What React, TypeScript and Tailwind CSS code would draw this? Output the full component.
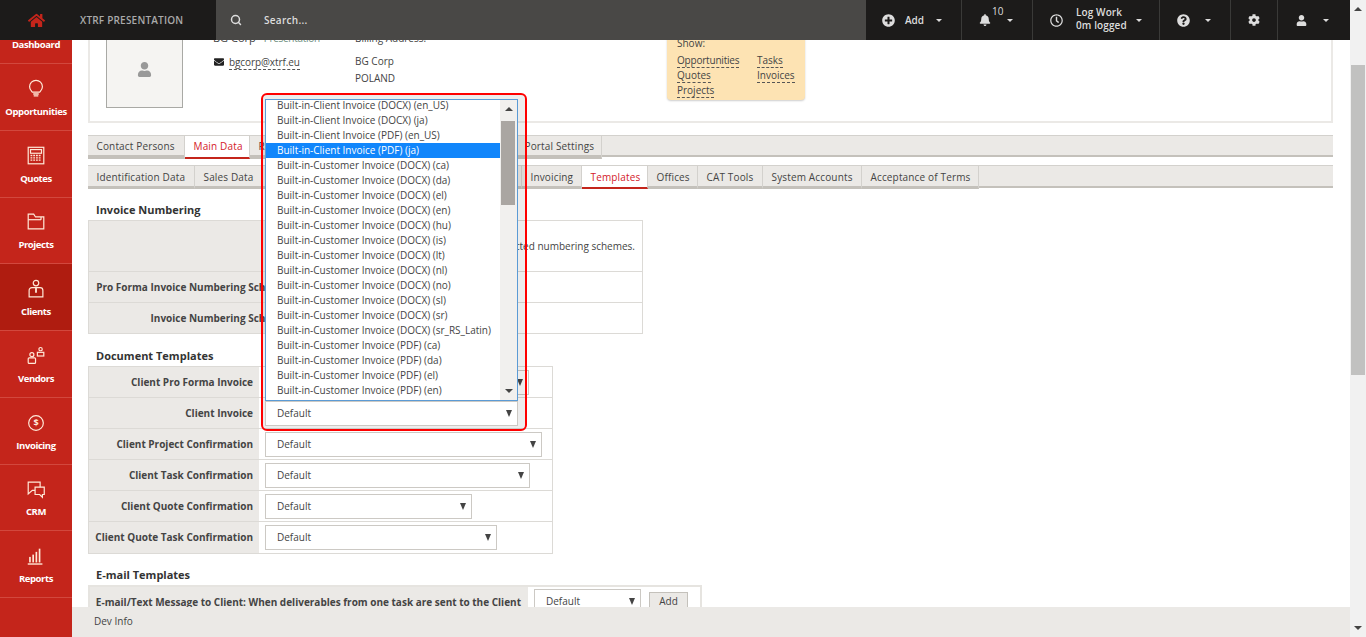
import { Search } from "lucide-react";
import { FaBell, FaCog, FaEnvelope, FaHome, FaPlusCircle, FaQuestionCircle, FaRegClock, FaUser } from "react-icons/fa";
import type { ReactNode } from "react";

const stroke = { fill: "none", stroke: "currentColor", strokeWidth: 1.3 };

const navItems: { label: string; icon: ReactNode; active?: boolean }[] = [
  { label: "Dashboard", icon: null },
  {
    label: "Opportunities",
    icon: (
      <g {...stroke}>
        <path d="M8 15.5c-1-1.4-3-3-3-6a7 7 0 0 1 14 0c0 3-2 4.6-3 6z" />
        <path d="M9 17.5h6M9.5 19.5h5" strokeWidth={1.6} />
      </g>
    ),
  },
  {
    label: "Quotes",
    icon: (
      <g {...stroke}>
        <rect x="3.5" y="2.5" width="17" height="18" />
        <rect x="6" y="5" width="12" height="4" />
        <path d="M6 11.5h12M6 14h12M6 16.5h12" strokeWidth={1.5} strokeDasharray="2 1" />
      </g>
    ),
  },
  {
    label: "Projects",
    icon: (
      <g {...stroke}>
        <path d="M3.5 19.5V3.5h6l2 3h9v13z" />
        <path d="M3.5 9.5h14" />
        <path d="M17.5 6.5v3" />
      </g>
    ),
  },
  {
    label: "Clients",
    active: true,
    icon: (
      <g {...stroke}>
        <circle cx="12" cy="5.5" r="3" />
        <path d="M4.5 20.5v-7a3 3 0 0 1 3-3h9a3 3 0 0 1 3 3v7z" />
        <path d="M12 11v5" strokeWidth={2} />
      </g>
    ),
  },
  {
    label: "Vendors",
    icon: (
      <g {...stroke}>
        <circle cx="7.5" cy="10.5" r="2.2" />
        <rect x="3.5" y="14" width="8" height="6" rx="1" />
        <circle cx="17" cy="4.5" r="1.8" />
        <rect x="13.5" y="8" width="7" height="4" />
      </g>
    ),
  },
  {
    label: "Invoicing",
    icon: (
      <g {...stroke}>
        <circle cx="12" cy="12" r="8" />
        <text x="12" y="15.5" textAnchor="middle" fontSize="10" fontWeight="700" fill="currentColor" stroke="none">$</text>
      </g>
    ),
  },
  {
    label: "CRM",
    icon: (
      <g {...stroke}>
        <path d="M3.5 4.5h13v9H8l-4.5 4z" />
        <path d="M11 10h10v8h-2v3l-3-3h-5z" fill="#c4251b" />
      </g>
    ),
  },
  {
    label: "Reports",
    icon: (
      <g fill="currentColor">
        <rect x="4.5" y="13" width="1.8" height="6" />
        <rect x="8" y="10.5" width="1.8" height="8.5" />
        <rect x="11.5" y="7.5" width="1.8" height="11.5" />
        <rect x="15" y="4" width="1.8" height="15" />
        <rect x="3" y="20" width="16" height="1.5" />
      </g>
    ),
  },
];

const selectOptions = [
  "Built-in-Client Invoice (DOCX) (en_US)",
  "Built-in-Client Invoice (DOCX) (ja)",
  "Built-in-Client Invoice (PDF) (en_US)",
  "Built-in-Client Invoice (PDF) (ja)",
  "Built-in-Customer Invoice (DOCX) (ca)",
  "Built-in-Customer Invoice (DOCX) (da)",
  "Built-in-Customer Invoice (DOCX) (el)",
  "Built-in-Customer Invoice (DOCX) (en)",
  "Built-in-Customer Invoice (DOCX) (hu)",
  "Built-in-Customer Invoice (DOCX) (is)",
  "Built-in-Customer Invoice (DOCX) (lt)",
  "Built-in-Customer Invoice (DOCX) (nl)",
  "Built-in-Customer Invoice (DOCX) (no)",
  "Built-in-Customer Invoice (DOCX) (sl)",
  "Built-in-Customer Invoice (DOCX) (sr)",
  "Built-in-Customer Invoice (DOCX) (sr_RS_Latin)",
  "Built-in-Customer Invoice (PDF) (ca)",
  "Built-in-Customer Invoice (PDF) (da)",
  "Built-in-Customer Invoice (PDF) (el)",
  "Built-in-Customer Invoice (PDF) (en)",
];

const docTemplates = [
  { label: "Client Pro Forma Invoice", width: "w-[264px]" },
  { label: "Client Invoice", width: "w-[252px]" },
  { label: "Client Project Confirmation", width: "w-[277px]" },
  { label: "Client Task Confirmation", width: "w-[265px]" },
  { label: "Client Quote Confirmation", width: "w-[207px]" },
  { label: "Client Quote Task Confirmation", width: "w-[232px]" },
];

const mainTabs = [
  { label: "Contact Persons", width: "w-[97px]" },
  { label: "Main Data", width: "w-[65px]", active: true },
  { label: "Rates", width: "w-[266px]" },
  { label: "Portal Settings", width: "w-[86px]" },
];

const subTabs = [
  { label: "Identification Data", width: "w-[107px]" },
  { label: "Sales Data", width: "w-[327px]" },
  { label: "Invoicing", width: "w-[60px]" },
  { label: "Templates", width: "w-[66px]", active: true },
  { label: "Offices", width: "w-[50px]" },
  { label: "CAT Tools", width: "w-[65px]" },
  { label: "System Accounts", width: "w-[99px]" },
  { label: "Acceptance of Terms", width: "w-[117px]" },
];

function Caret() {
  return <span className="block h-0 w-0 border-x-[3px] border-t-[3px] border-x-transparent border-t-[#ddd]" />;
}

function SelectArrow() {
  return <span className="block h-0 w-0 border-x-[3.5px] border-t-[7px] border-x-transparent border-t-[#444]" />;
}

function Select({ width }: { width: string }) {
  return (
    <div className={`flex h-[25px] items-center justify-between border border-[#ccc9c4] bg-white pl-[11px] pr-[5px] ${width}`}>
      <span>Default</span>
      <SelectArrow />
    </div>
  );
}

function TabBar({ tabs, className }: { tabs: { label: string; width: string; active?: boolean }[]; className: string }) {
  return (
    <div className={`flex border-t border-[#d3d1cd] bg-[#ebe9e6] tracking-[0.15px] ${className}`}>
      {tabs.map((tab) => (
        <div
          key={tab.label}
          className={`-mb-[2px] h-[23px] border-r border-[#d3d1cd] pl-[8.5px] ${tab.width} ${
            tab.active ? "border-b-2 border-b-[#c4251b] bg-white text-[#d4202a]" : "border-b-2 border-b-[#c4c1bb]"
          }`}
        >
          {tab.label}
        </div>
      ))}
    </div>
  );
}

function DashedLink({ children }: { children: ReactNode }) {
  return <span className="border-b border-dashed border-[#555] leading-[14px]">{children}</span>;
}

export default function App() {
  return (
    <div className="relative flex h-[637px] w-[1366px] overflow-hidden bg-white font-['Open_Sans',sans-serif] text-[10px] text-[#444]">
      <div className="flex min-w-0 flex-1 flex-col">
        <header className="z-10 flex h-10 shrink-0 text-[#ddd]">
          <div className="flex w-[216px] items-center bg-[#1c1b1a]">
            <FaHome className="ml-[28px] h-[17px] w-[17px] text-[#c4251b]" />
            <span className="ml-[35px] font-semibold tracking-[0.2px] text-[#aaa]">XTRF PRESENTATION</span>
          </div>
          <div className="flex w-[650px] items-center bg-[#494846]">
            <Search className="ml-[14px] h-3 w-3" strokeWidth={3} />
            <span className="ml-[22px] font-semibold tracking-[0.3px]">Search...</span>
          </div>
          <div className="flex flex-1 items-center bg-[#1c1b1a] font-semibold">
            <div className="flex h-full w-[96px] items-center border-r border-[#3a3a38] pl-[16px]">
              <FaPlusCircle className="h-[13px] w-[13px]" />
              <span className="ml-[10px] mr-[12px]">Add</span>
              <Caret />
            </div>
            <div className="flex h-full w-[71px] items-center border-r border-[#3a3a38] pl-[17px]">
              <FaBell className="h-3 w-3" />
              <span className="mb-[18px] ml-[1px] font-normal">10</span>
              <span className="ml-[4px]"><Caret /></span>
            </div>
            <div className="flex h-full w-[127px] items-center border-r border-[#3a3a38] pl-[17px]">
              <FaRegClock className="h-[13px] w-[13px]" />
              <div className="mb-[2px] ml-[13px] leading-[13px] tracking-[0.1px]">
                <div>Log Work</div>
                <div>0m logged</div>
              </div>
              <span className="ml-[9px]"><Caret /></span>
            </div>
            <div className="flex h-full w-[71px] items-center border-r border-[#3a3a38] pl-[17px]">
              <FaQuestionCircle className="h-[13px] w-[13px]" />
              <span className="ml-[15px]"><Caret /></span>
            </div>
            <div className="flex h-full w-[47px] items-center border-r border-[#3a3a38] pl-[17px]">
              <FaCog className="h-3 w-3" />
            </div>
            <div className="flex h-full flex-1 items-center pl-[18px]">
              <FaUser className="h-[11px] w-[11px]" />
              <span className="ml-[16px]"><Caret /></span>
            </div>
          </div>
        </header>

        <div className="flex min-h-0 flex-1">
          <nav className="w-[72px] shrink-0 overflow-hidden bg-[#c4251b] text-white">
            <div className="-mt-[42.75px]">
              {navItems.map((item) => (
                <div
                  key={item.label}
                  className={`flex h-[66.75px] flex-col items-center justify-end border-b border-[#d2483e] pb-[11px] ${
                    item.active ? "bg-[#af1c10]" : ""
                  }`}
                >
                  <svg viewBox="0 0 24 24" className="mb-[5px] h-[22px] w-[22px] text-[#ffe9d8]">
                    {item.icon}
                  </svg>
                  <span className="text-[9.5px] font-bold leading-[14px] tracking-[-0.4px]">{item.label}</span>
                </div>
              ))}
            </div>
          </nav>

          <div className="flex min-w-0 flex-1 flex-col">
            <main className="min-h-0 flex-1 overflow-hidden pl-4 pr-[17px]">
              <div className="-mt-[30px]">
                <section className="flex h-[113px] border-2 border-[#ebe9e6] pl-4 pt-[18px]">
                  <div className="flex h-[78px] w-[77px] shrink-0 items-center justify-center border border-[#a9a9a5] bg-[#f5f4f2]">
                    <FaUser className="h-[15px] w-[15px] text-[#999]" />
                  </div>
                  <div className="ml-[30px] w-[142px] shrink-0">
                    <div className="leading-[16px]">
                      <span className="text-[11px]">BG Corp</span>
                      <span className="ml-[8px] tracking-[-0.3px] text-[#6f8f7f]">Presentation</span>
                    </div>
                    <div className="mt-[9px] flex items-center leading-[14px]">
                      <FaEnvelope className="ml-px mr-[5px] h-[10px] w-[10px] text-[#222]" />
                      <span className="tracking-[-0.1px]"><DashedLink>bgcorp@xtrf.eu</DashedLink></span>
                    </div>
                  </div>
                  <div className="w-[312px] shrink-0">
                    <div className="leading-[16px]">Billing Address:</div>
                    <div className="mt-[7px] leading-[17px]">BG Corp</div>
                    <div className="leading-[17px]">POLAND</div>
                  </div>
                  <div className="h-[70px] w-[138px] shrink-0 rounded-b-[4px] bg-[#fde3b3] pl-[10px] pt-[6px] shadow-[0_1px_2px_rgba(0,0,0,0.2)]">
                    <div className="leading-[14px]">Show:</div>
                    <div className="mt-[3px] grid grid-cols-[80px_1fr] justify-items-start leading-[14px]">
                      <span className="tracking-[-0.2px]"><DashedLink>Opportunities</DashedLink></span>
                      <DashedLink>Tasks</DashedLink>
                      <DashedLink>Quotes</DashedLink>
                      <DashedLink>Invoices</DashedLink>
                      <DashedLink>Projects</DashedLink>
                    </div>
                  </div>
                </section>

                <TabBar tabs={mainTabs} className="mt-3 h-[22px] border-b-2 border-b-[#c4c1bb] leading-[20px]" />
                <TabBar tabs={subTabs} className="mt-2 h-[23px] border-b-2 border-b-[#c4c1bb] leading-[22px]" />

                <h2 className="ml-2 mt-[14px] text-[11px] font-bold leading-[16px] text-[#333]">Invoice Numbering</h2>
                <div className="mt-[2px] w-[555px] border border-[#dcdad6]">
                  <div className="flex h-[51px] border-b border-[#dcdad6]">
                    <div className="w-[198px] shrink-0 bg-[#ebe9e6]" />
                    <div className="flex flex-1 items-center justify-end whitespace-nowrap pr-[7px]">
                      Invoices will be numbered according to the selected numbering schemes.
                    </div>
                  </div>
                  <div className="flex h-[31px] border-b border-[#dcdad6]">
                    <div className="flex w-[198px] items-center justify-end bg-[#ebe9e6] font-bold">Pro Forma Invoice Numbering Scheme</div>
                  </div>
                  <div className="flex h-[30px]">
                    <div className="flex w-[198px] items-center justify-end bg-[#ebe9e6] font-bold">Invoice Numbering Scheme</div>
                  </div>
                </div>

                <h2 className="ml-2 mt-[14px] text-[11px] font-bold leading-[16px] text-[#333]">Document Templates</h2>
                <div className="mt-[2px] w-[465px] border border-[#dcdad6]">
                  {docTemplates.map((row, i) => (
                    <div key={row.label} className={`flex h-[31px] ${i < docTemplates.length - 1 ? "border-b border-[#dcdad6]" : ""}`}>
                      <div className="flex w-[170px] shrink-0 items-center justify-end bg-[#ebe9e6] pr-[6px] font-bold">{row.label}</div>
                      <div className="flex items-center pl-[6px]">
                        <Select width={row.width} />
                      </div>
                    </div>
                  ))}
                </div>

                <h2 className="ml-2 mt-[13px] text-[11px] font-bold leading-[16px] text-[#333]">E-mail Templates</h2>
                <div className="mt-[2px] flex h-[40px] w-[614px] border-2 border-[#e6e4e0]">
                  <div className="flex w-[438px] shrink-0 items-start justify-end bg-[#ebe9e6] pr-[7px] pt-[8px] font-bold leading-[14px]">
                    E-mail/Text Message to Client: When deliverables from one task are sent to the Client
                  </div>
                  <div className="flex items-start pl-[6px] pt-[2px]">
                    <Select width="w-[107px]" />
                    <div className="ml-[8px] mt-[3px] flex h-[18px] w-[39px] items-center justify-center border border-[#c4c1bb] bg-[#ebe9e6]">Add</div>
                  </div>
                </div>
              </div>
            </main>
            <footer className="z-10 flex h-[30px] shrink-0 items-center bg-[#ebe9e6] pb-px pl-[22px]">Dev Info</footer>
          </div>
        </div>
      </div>

      <div className="flex w-4 shrink-0 flex-col items-center justify-between bg-[#f1f1f1] py-[7px]">
        <span className="h-0 w-0 border-x-[4px] border-b-[4px] border-x-transparent border-b-[#444]" />
        <span className="h-0 w-0 border-x-[4px] border-t-[4px] border-x-transparent border-t-[#444]" />
        <div className="absolute right-[1px] top-[65px] h-[310px] w-[14px] bg-[#c1c1c0]" />
      </div>

      {/* open select of the Client Invoice row */}
      <div className="absolute left-[261px] top-[93px] z-20 h-[338px] w-[266px] rounded-[6px] border-2 border-[#ff0000] bg-black/[0.07] pl-[2px] pt-[4px]">
        <div className="flex h-[302px] w-[253px] overflow-hidden border border-[#5b9bd5] bg-white">
          <ul className="-mt-[2px] min-w-0 flex-1">
            {selectOptions.map((opt, i) => (
              <li key={opt} className={`h-[15px] pl-[11px] leading-[15px] ${i === 3 ? "bg-[#1186fb] text-white" : ""}`}>
                {opt}
              </li>
            ))}
          </ul>
          <div className="relative flex w-[17px] shrink-0 flex-col items-center justify-between bg-[#f1f0ee] py-[7px]">
            <span className="h-0 w-0 border-x-[4px] border-b-[4px] border-x-transparent border-b-[#444]" />
            <span className="h-0 w-0 border-x-[4px] border-t-[4px] border-x-transparent border-t-[#444]" />
            <div className="absolute left-[1px] top-[21px] h-[84px] w-[14px] bg-[#aaa6a2]" />
          </div>
        </div>
        <Select width="w-[253px]" />
      </div>
    </div>
  );
}
